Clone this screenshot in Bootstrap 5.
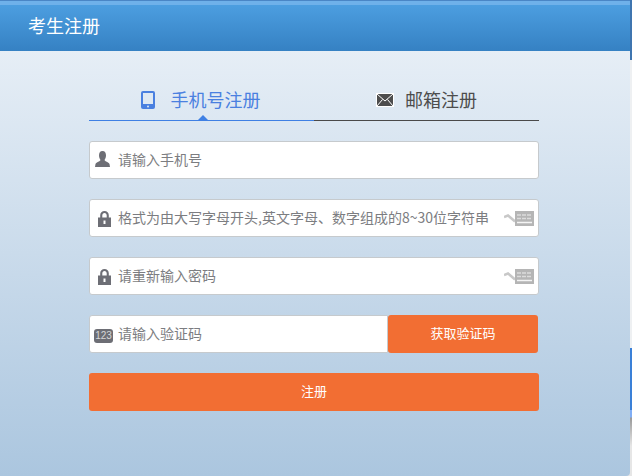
<!DOCTYPE html>
<html lang="zh">
<head>
<meta charset="utf-8">
<title>考生注册</title>
<link rel="stylesheet" href="https://cdn.jsdelivr.net/npm/bootstrap@5.3.0/dist/css/bootstrap.min.css">
<style>
html,body{height:100%;margin:0;}
body{background:linear-gradient(180deg,#3f75b0 0,#3f75b0 60px,#eef0f2 60px,#eef0f2 348px,#3a80d8 348px,#3a80d8 410px,#80aef5 410px,#80aef5 417px,#9a9a9a 418px,#e6e6e6 446px,#e6e6e6 100%);font-family:"Microsoft YaHei","Noto Sans CJK SC","Liberation Sans",sans-serif;overflow:hidden;}
.reg-win{width:630px;height:476px;display:flex;flex-direction:column;border-bottom-right-radius:4px;overflow:hidden;}
.reg-head{height:51px;flex:none;border-top:1px solid #4a86c6;background:linear-gradient(180deg,#6fb1ea 0,#6fb1ea 4px,#4c9ee0 4px,#3581c3 100%);color:#fff;font-size:18px;line-height:48px;padding-left:28px;}
.reg-main{flex:1;background:linear-gradient(180deg,#e6eef6 0,#abc6df 100%);}
.reg-body{width:450px;margin-left:89px;}
.reg-tabs{padding-top:29px;height:70px;}
.reg-tab{width:225px;height:41px;font-size:18px;position:relative;gap:11px;border-bottom:1px solid #4a4a4a;color:#4d4d4d;}
.reg-tab.is-on{color:#4a80e0;border-bottom-color:#3f80e4;gap:16px;padding-right:2px;}
.reg-tab.is-on::after{content:"";position:absolute;left:109px;bottom:0;border:5px solid transparent;border-top:0;border-bottom-color:#3f80e4;}
.tab-lbl{padding-bottom:2px;}
.reg-field{height:38px;background:#fff;border:1px solid #c6cacd;border-radius:3px;font-size:14px;color:#7c7d81;margin-bottom:20px;}
.reg-field .fi-ic{width:28px;flex:none;}
.fi-txt{white-space:nowrap;padding-bottom:2px;}
.fi-kb{position:absolute;right:4px;top:11px;}
.reg-wrap{position:relative;}
.reg-code-in{width:299px;flex:none;margin:0;border-top-right-radius:0;border-bottom-right-radius:0;}
.reg-btn{background:#f26e33;color:#fff;border:0;border-radius:3px;font-size:13px;padding:0 0 2px;height:38px;}
.reg-btn:hover{background:#f26e33;color:#fff;}
.reg-code-btn{width:150px;}
.reg-sub{width:450px;margin-top:20px;display:block;}
.bdg{width:19px;height:14px;border-radius:3px;background:#6d6e75;color:#d6d6d8;font:10px/14px "Liberation Sans",sans-serif;text-align:center;margin:3px 0 0 4px;display:block;}
.ic-user{margin:-2px 3px 0 0;}
.ic-lock{margin-top:1px;}
</style>
</head>
<body>
<div class="reg-win">
  <div class="reg-head">考生注册</div>
  <div class="reg-main">
  <div class="reg-body">
    <div class="reg-tabs d-flex">
      <div class="reg-tab is-on d-flex justify-content-center align-items-center">
        <svg width="14" height="18" viewBox="0 0 14 18"><rect x="0" y="0" width="14" height="18" rx="2" fill="#4a80e0"/><rect x="2" y="2" width="10" height="11" fill="#dfe9f3"/><circle cx="7" cy="15.500" r="1" fill="#dfe9f3"/></svg>
        <span class="tab-lbl">手机号注册</span>
      </div>
      <div class="reg-tab d-flex justify-content-center align-items-center">
        <svg width="18" height="14" viewBox="0 0 18 14"><rect x=".5" y=".5" width="17" height="13" fill="#4d4d4d" stroke="#fff"/><path d="M1 1L9 8L17 1M1 13L6.500 6.500M17 13L11.500 6.500" stroke="#fff" stroke-width="1" fill="none"/></svg>
        <span class="tab-lbl">邮箱注册</span>
      </div>
    </div>
    <div class="pt-3 pb-1"></div>
    <div class="reg-field d-flex align-items-center">
      <div class="fi-ic d-flex justify-content-center"><svg class="ic-user" width="15" height="16" viewBox="0 0 15 16"><path d="M7.500 0C5 0 4 2 4 4.500C4 6.500 5 8 5.500 9C5 10.500 1.500 11 0.500 13L0 16H15L14.500 13C13.500 11 10 10.500 9.500 9C10 8 11 6.500 11 4.500C11 2 10 0 7.500 0Z" fill="#6d6e75"/></svg></div>
      <span class="fi-txt">请输入手机号</span>
    </div>
    <div class="reg-field reg-wrap d-flex align-items-center">
      <div class="fi-ic d-flex justify-content-center"><svg class="ic-lock" width="13" height="16" viewBox="0 0 13 16"><path fill-rule="evenodd" d="M2.200 6.500V4.300C2.200 1.800 4 0 6.500 0S10.800 1.800 10.800 4.300V6.500H13V16H0V6.500ZM4.300 6.500H8.700V4.300C8.700 3 7.800 2 6.500 2S4.300 3 4.300 4.300ZM5.500 9.500V13H7.500V9.500Z" fill="#6d6e75"/></svg></div>
      <span class="fi-txt">格式为由大写字母开头,英文字母、数字组成的8~30位字符串</span>
      <svg class="fi-kb" width="30" height="15" viewBox="0 0 30 15"><path d="M0 6L4 4.500L7 7L11 10.500" stroke="#c8c8c8" stroke-width="2.500" fill="none"/><rect x="11" y="0" width="19" height="15" fill="#b5b5b5"/><path d="M13 4H28M13 7.500H28" stroke="#dcdcdc" stroke-width="1.500" stroke-dasharray="4 1"/><path d="M13 11.500H28" stroke="#f4f4f4" stroke-width="1.500"/></svg>
    </div>
    <div class="reg-field reg-wrap d-flex align-items-center">
      <div class="fi-ic d-flex justify-content-center"><svg class="ic-lock" width="13" height="16" viewBox="0 0 13 16"><path fill-rule="evenodd" d="M2.200 6.500V4.300C2.200 1.800 4 0 6.500 0S10.800 1.800 10.800 4.300V6.500H13V16H0V6.500ZM4.300 6.500H8.700V4.300C8.700 3 7.800 2 6.500 2S4.300 3 4.300 4.300ZM5.500 9.500V13H7.500V9.500Z" fill="#6d6e75"/></svg></div>
      <span class="fi-txt">请重新输入密码</span>
      <svg class="fi-kb" width="30" height="15" viewBox="0 0 30 15"><path d="M0 6L4 4.500L7 7L11 10.500" stroke="#c8c8c8" stroke-width="2.500" fill="none"/><rect x="11" y="0" width="19" height="15" fill="#b5b5b5"/><path d="M13 4H28M13 7.500H28" stroke="#dcdcdc" stroke-width="1.500" stroke-dasharray="4 1"/><path d="M13 11.500H28" stroke="#f4f4f4" stroke-width="1.500"/></svg>
    </div>
    <div class="d-flex">
      <div class="reg-field reg-code-in d-flex align-items-center">
        <div class="fi-ic"><span class="bdg">123</span></div>
        <span class="fi-txt">请输入验证码</span>
      </div>
      <button type="button" class="btn reg-btn reg-code-btn">获取验证码</button>
    </div>
    <button type="button" class="btn reg-btn reg-sub">注册</button>
  </div>
  </div>
</div>
<script src="https://cdn.jsdelivr.net/npm/bootstrap@5.3.0/dist/js/bootstrap.bundle.min.js"></script>
</body>
</html>
